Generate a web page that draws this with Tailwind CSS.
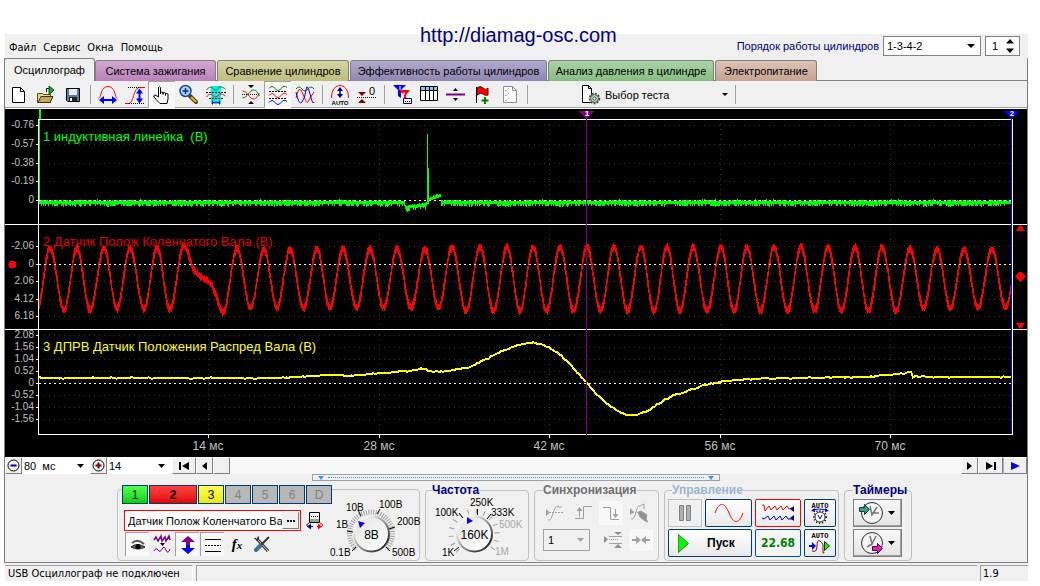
<!DOCTYPE html>
<html lang="ru">
<head>
  <meta charset="UTF-8" />
  <meta name="viewport" content="width=device-width, initial-scale=1.0" />
  <title>Осциллограф</title>
  <script src="https://cdn.jsdelivr.net/npm/@tailwindcss/browser@4"></script>
</head>
<body class="bg-white pt-[34px] font-['Liberation_Sans',Arial,sans-serif] text-[11px] leading-[14px] text-black">

  <div class="relative mr-3 ml-1">

    <a href="http://diamag-osc.com" class="absolute -top-[11px] left-[416px] text-[20px] leading-6 text-[#000080]">http://diamag-osc.com</a>

    <!-- Menu -->
    <header class="ml-px flex h-6 items-center justify-between bg-[#f0f0f0] pr-2">
      <nav class="flex gap-[7px] pt-[3px] pl-1 font-['DejaVu_Sans_Condensed','DejaVu_Sans',sans-serif] text-[11px]">
        <button>Файл</button>
        <button>Сервис</button>
        <button>Окна</button>
        <button>Помощь</button>
      </nav>
      <div class="flex items-center">
        <label for="order" class="mr-1 text-[#000080]">Порядок работы цилиндров</label>
        <div class="relative mr-1">
          <select id="order" class="block h-5 w-[98px] appearance-none border border-[#828282] bg-white pl-[3px]">
            <option>1-3-4-2</option>
          </select>
          <svg class="pointer-events-none absolute top-2 right-1.5" width="8" height="4" viewBox="0 0 8 4"><path d="M0 0h8L4 4z" /></svg>
        </div>
        <div class="relative">
          <input type="text" value="1" aria-label="Цилиндр" class="block h-5 w-[35px] border border-[#828282] bg-white pl-1.5" />
          <svg class="absolute top-[3px] right-1.5" width="8" height="14" viewBox="0 0 8 14"><path d="M0 4.500h8L4 0zM0 9.500h8L4 14z" /></svg>
        </div>
      </div>
    </header>

    <main class="border-x border-[#808080] bg-[#f0f0f0]">

      <!-- Tabs -->
      <div class="relative z-10 -mb-px -ml-px flex h-[23px] items-end">
        <button class="h-[23px] w-[91px] rounded-t-[3px] border border-b-0 border-[#808080] bg-[#f0f0f0]">Осциллограф</button>
        <button class="mr-px h-[21px] w-[121px] rounded-t-[3px] border border-b-0 border-[#808080] bg-linear-to-b from-[#d3a8d1] to-[#b982b8]">Система зажигания</button>
        <button class="mr-px h-[21px] w-[132px] rounded-t-[3px] border border-b-0 border-[#808080] bg-linear-to-b from-[#d5d5a4] to-[#bdbd7c]">Сравнение цилиндров</button>
        <button class="mr-px h-[21px] w-[197px] rounded-t-[3px] border border-b-0 border-[#808080] bg-linear-to-b from-[#b1aacd] to-[#8f86b1]">Эффективность работы цилиндров</button>
        <button class="mr-px h-[21px] w-[166px] rounded-t-[3px] border border-b-0 border-[#808080] bg-linear-to-b from-[#aad3a6] to-[#85bd80]">Анализ давления в цилиндре</button>
        <button class="h-[21px] w-[102px] rounded-t-[3px] border border-b-0 border-[#808080] bg-linear-to-b from-[#dcc3b5] to-[#c5a492]">Электропитание</button>
      </div>

      <!-- Toolbar -->
      <div class="flex h-[29px] items-stretch border-t border-b border-[#808080] border-b-white shadow-[inset_0_-1px_0_#a0a0a0]">
        <button aria-label="Новый" class="grid w-[27px] place-items-center"><svg width="22" height="22" viewBox="0 0 22 22" fill="none"><path d="M4.500 3.500h8l4 4v11h-12zM12.500 3.500v4h4" stroke="#000" fill="#fff" /></svg></button>
        <button aria-label="Открыть" class="grid w-[27px] place-items-center"><svg width="22" height="22" viewBox="0 0 22 22"><path d="M2.500 18.500v-9h5l1 1h7v8z" fill="#e8d48a" stroke="#5c4a10" /><path d="M3 18.500l3-6h12l-3 6z" fill="#c9a84c" stroke="#3c3008" /><path d="M14 2l5 4-5 5z" fill="#00b020" stroke="#005c10" /><path d="M11.500 8V4.500H14" fill="none" stroke="#000" /></svg></button>
        <button aria-label="Сохранить" class="grid w-[27px] place-items-center"><svg width="22" height="22" viewBox="0 0 22 22"><path d="M4.500 4.500h13v13h-12l-1-1z" fill="#5a78a8" stroke="#000" /><path d="M7 5h8v6H7z" fill="#e8eef8" /><path d="M7 13h8v4H7z" fill="#222" /><path d="M8 14h2v3H8z" fill="#fff" /></svg></button>
        <span class="my-1 mr-[3px] ml-1 w-px bg-[#a0a0a0]"></span>
        <button aria-label="Ширина" class="grid w-[27px] place-items-center"><svg width="22" height="22" viewBox="0 0 22 22" fill="none"><path d="M1.500 14.500c2-1 2-3 2.500-5C5 5 8 2.500 11 2.500S17 5 18 9.500c.5 2 .5 4 2.500 5" stroke="#f00" /><path d="M5 16h12" stroke="#00f" stroke-width="2" /><path d="M7 12v8l-5-4zM15 12v8l5-4z" fill="#00f" /></svg></button>
        <button aria-label="Высота" class="grid w-[27px] place-items-center"><svg width="22" height="22" viewBox="0 0 22 22" fill="none"><path d="M1 19.500h4c5-1 4-15 10-16h6" stroke="#f00" /><path d="M4 3.500h11M5 19.500h16" stroke="#000" stroke-dasharray="1 1" /><path d="M15.500 8v8" stroke="#00f" stroke-width="2" /><path d="M12 9.500h7l-3.500-5zM12 14.500h7l-3.500 5z" fill="#00f" /></svg></button>
        <button aria-label="Рука" class="grid w-[27px] place-items-center border-t border-l border-[#a0a0a0] bg-[#f8f8f8]"><svg width="22" height="22" viewBox="0 0 22 22"><path d="M7.500 13V3.500q1-1.500 2 0V10V8.500q1-1 2.500 0V10.500V9q1-1 2.500 0v2.500V10q1-1 2.500 0v5l-1 4.500h-7L5 15.500 2.500 12q1-2 3.500 0z" fill="#fff" stroke="#000" /></svg></button>
        <button aria-label="Лупа" class="grid w-[27px] place-items-center"><svg width="22" height="22" viewBox="0 0 22 22"><path d="M12 12l6 6" stroke="#4a3c10" stroke-width="4" stroke-linecap="round" /><path d="M13 13l5 5" stroke="#d8b030" stroke-width="2" /><circle cx="7.500" cy="7" r="5.500" fill="#a8d0f4" stroke="#204a80" stroke-width="1.500" /><path d="M4.500 7h6M7.500 4v6" stroke="#003090" stroke-width="1.500" /></svg></button>
        <button aria-label="Область" class="grid w-[27px] place-items-center"><svg width="22" height="22" viewBox="0 0 22 22" fill="none"><path d="M6 2h10v18H6z" fill="#00f0f0" /><path d="M1.500 6c3-4 5-3 7-1s4 1 5-1 4-1 7 1" stroke="#008000" /><path d="M1.500 13c3-4 5-3 7-1s4 1 5-1 4-1 7 1" stroke="#f00" /><path d="M1 8.500h20M4 14.500h15" stroke="#000" stroke-dasharray="2 1" /><path d="M7 18.500h8M7.500 16.500v4M14.500 16.500v4" stroke="#000080" /></svg></button>
        <span class="my-1 mr-[3px] ml-1 w-px bg-[#a0a0a0]"></span>
        <button aria-label="Совместить" class="grid w-[27px] place-items-center"><svg width="22" height="22" viewBox="0 0 22 22" fill="none"><path d="M2 10.500h18" stroke="#000" stroke-dasharray="1 1" /><path d="M2.500 7c5 0 7 8 11 8 3 0 4-3 6-6" stroke="#f00" /><path d="M2.500 14c5 0 7-8 11-8 3 0 4 3 6 6" stroke="#008000" /><path d="M8 1h6l-3 3zM8 20h6l-3-3z" fill="#000" /></svg></button>
        <button aria-label="Разделить" class="grid w-[27px] place-items-center border-t border-l border-[#a0a0a0] bg-[#f8f8f8]"><svg width="22" height="22" viewBox="0 0 22 22" fill="none"><path d="M2 4.500q3-4 6 0t6 0 6-1" stroke="#008000" /><path d="M2 11.500q3-4 6 0t6 0 6-1" stroke="#f00" /><path d="M2 18.500q3-4 6 0t6 0 6-1" stroke="#00f" /><path d="M2 7.500h18M2 14.500h18" stroke="#000" stroke-dasharray="2 1" /></svg></button>
        <button aria-label="Наложить" class="grid w-[27px] place-items-center"><svg width="22" height="22" viewBox="0 0 22 22" fill="none"><path d="M2 5q3-4 6 0t6 0 6 0" stroke="#008000" /><path d="M2 14Q5-1 9 10t5 8 6-10" stroke="#f00" /><path d="M2 8q3 14 6 10t4-12 4 4 4 8" stroke="#00f" /></svg></button>
        <span class="my-1 mr-[3px] ml-1 w-px bg-[#a0a0a0]"></span>
        <button aria-label="Авто" class="grid w-[27px] place-items-center"><svg width="22" height="22" viewBox="0 0 22 22" fill="none"><path d="M2.500 14C2.500 5 7 1.500 11 1.500S19.500 5 19.500 14" stroke="#f00" /><path d="M11 5v6" stroke="#000080" stroke-width="1.500" /><path d="M8 7h6l-3-4zM8 10h6l-3 4z" fill="#000080" /><text x="11" y="20.500" font-size="6" font-weight="bold" text-anchor="middle" fill="#000">AUTO</text></svg></button>
        <button aria-label="Ноль" class="grid w-[27px] place-items-center"><svg width="22" height="22" viewBox="0 0 22 22"><path d="M2 8h8l-4 4zM2 19h8l-4-4z" fill="#800000" /><path d="M1 13.500h19" stroke="#000" stroke-dasharray="1 1" /><text x="13" y="11" font-size="11">0</text></svg></button>
        <span class="my-1 mr-[3px] ml-1 w-px bg-[#a0a0a0]"></span>
        <button aria-label="Фильтр" class="grid w-[27px] place-items-center"><svg width="22" height="22" viewBox="0 0 22 22"><path d="M2 1h13L10 6v8l-3-2V6z" fill="#00f" /><path d="M8 6h11l-4 5v6l-2-2v-4z" fill="#f00" /><path d="M9 2v4M13 8v3" stroke="#fff" /><path d="M12.500 14.500h8v5h-8z" fill="#fff" stroke="#000080" /><path d="M14 17.500h5" stroke="#00f" stroke-dasharray="1 1" /></svg></button>
        <button aria-label="Таблица" class="grid w-[27px] place-items-center"><svg width="22" height="22" viewBox="0 0 22 22"><path d="M2.500 2.500h17v14h-17z" fill="#fff" stroke="#000" /><path d="M3 3h16v3H3z" fill="#a0c0e8" /><path d="M3 6.500h16M7.500 3v13M11.500 3v13M15.500 3v13" stroke="#000" /></svg></button>
        <button aria-label="Линия" class="grid w-[27px] place-items-center"><svg width="22" height="22" viewBox="0 0 22 22"><path d="M1 9.500h19v2H1z" fill="#800080" /><path d="M8 7h5l-2.500-3zM8 14h5l-2.500 3z" /></svg></button>
        <button aria-label="Флаг" class="grid w-[27px] place-items-center"><svg width="22" height="22" viewBox="0 0 22 22"><path d="M4.500 3v16" stroke="#000" /><path d="M5 4q3-3 6 0t5 0v7q-3 1-5-1t-6 1z" fill="#f00" stroke="#600" /><path d="M13 13v7M9.500 16.500h7" stroke="#008000" stroke-width="2" /></svg></button>
        <button aria-label="Отчёт" disabled class="grid w-[27px] place-items-center"><svg width="22" height="22" viewBox="0 0 22 22" fill="none" stroke="#909090"><path d="M4.500 2.500h9l4 4v12h-13zM13.500 2.500v4h4" fill="#fafafa" /><path d="M6 6l1 1 3-3M6 11l1 1 3-3M6 16l1 1 3-3" stroke-dasharray="1 1" /></svg></button>
        <span class="my-1 mr-[3px] ml-1 w-px bg-[#a0a0a0]"></span>
        <button class="ml-12 flex w-[152px] items-center">
          <svg class="mr-1" width="22" height="22" viewBox="0 0 22 22" fill="none"><path d="M3.500 1.500h6l3 3v14h-9zM9.500 1.500v3h3" fill="#fff" stroke="#000" /><circle cx="15.500" cy="14.500" r="4.500" fill="#b8ccb8" stroke="#405040" stroke-width="2.500" stroke-dasharray="1.800 1.200" /><circle cx="15.500" cy="14.500" r="4" fill="#b8ccb8" stroke="#506850" /><circle cx="15.500" cy="14.500" r="1.500" fill="#fff" stroke="#405040" /></svg>
          <span class="grow text-left">Выбор теста</span>
          <svg class="mr-[3px]" width="6" height="3" viewBox="0 0 6 3"><path d="M0 0h6L3 3z" /></svg>
        </button>
        <span class="my-1 ml-1 w-px bg-[#a0a0a0]"></span>
      </div>

      <!-- Oscillogram -->
      <div id="scope" class="relative h-[348px] bg-black text-[10px] leading-none text-[#c0c0c0]">
        <svg class="absolute inset-0 h-full w-full" viewBox="5 109 1022 348" preserveAspectRatio="none" fill="none" shape-rendering="crispEdges">
          <g id="grid" stroke="#3c3c00" stroke-dasharray="1 4"></g>
          <path d="M39.500 109v92" stroke="#0f0" />
          <path d="M39 109h2v10h-2z" fill="#0f0" />
          <path d="M38 119.500h975M5 224.500h1022M5 329.500h1022M38 434.500h975M38.500 119v316M1012.500 119v316" stroke="#fff" />
          <path d="M1011.500 118v316" stroke="#00f" />
          <g id="ticks" stroke="#fff"></g>
          <path id="trace1" stroke="#0f0" />
          <path id="trace2" stroke="#f00" />
          <path id="trace3" stroke="#ff0" stroke-width="2" />
          <path d="M39 200.500h972M39 264.500h972M39 383.500h972" stroke="#fff" stroke-dasharray="2 3" />
          <path d="M586.500 118v317" stroke="#800080" />
          <path d="M579 111h15l-7 8h-1z" fill="#800080" />
          <path d="M1004 111h15l-7 8h-1z" fill="#00f" />
          <path d="M1016 231h9l-4-6h-1zM1016 323h9l-4 6h-1zM1015 276.500l5.500-5 5 5-5 5z" fill="#f00" />
          <circle cx="12.500" cy="264.500" r="4" fill="#f00" />
        </svg>
        <div class="absolute top-5 left-[38px] text-[13px] leading-[15px] whitespace-pre text-[#0f0]">1 индуктивная линейка  (В)</div>
        <div class="absolute top-[125px] left-[38px] text-[13px] leading-[15px] text-[#e00000]">2 Датчик Полож Коленчатого Вала (В)</div>
        <div class="absolute top-[230px] left-[38px] text-[13px] leading-[15px] text-[#ff0]">3 ДПРВ Датчик Положения Распред Вала (В)</div>
      </div>

      <!-- Time scale and scrolling -->
      <div class="flex h-[17px] bg-[#f8f8f8]">
        <button aria-label="Уменьшить" class="w-[17px] border border-white border-r-[#808080] border-b-[#808080] bg-[#f0f0f0]"><svg width="15" height="15" viewBox="0 0 15 15"><circle cx="7.500" cy="7.500" r="5.500" fill="#f4f4f4" stroke="#000" /><path d="M4.500 7.500h6" stroke="#000080" stroke-width="2" /></svg></button>
        <div class="relative">
          <select aria-label="Развёртка" class="block h-[17px] w-[68px] appearance-none bg-white pl-0.5"><option>80 &nbsp;мс</option></select>
          <svg class="pointer-events-none absolute top-[7px] right-1.5" width="7" height="4" viewBox="0 0 7 4"><path d="M0 0h7L3.500 4z" /></svg>
        </div>
        <button aria-label="Увеличить" class="w-[17px] border border-white border-r-[#808080] border-b-[#808080] bg-[#f0f0f0]"><svg width="15" height="15" viewBox="0 0 15 15"><circle cx="7.500" cy="7.500" r="5.500" fill="#f4f4f4" stroke="#000" /><path d="M4.500 7.500h6M7.500 4.500v6" stroke="#800000" stroke-width="2" /></svg></button>
        <div class="relative">
          <select aria-label="Шаг" class="block h-[17px] w-[65px] appearance-none bg-white pl-0.5"><option>14</option></select>
          <svg class="pointer-events-none absolute top-[7px] right-[7px]" width="7" height="4" viewBox="0 0 7 4"><path d="M0 0h7L3.500 4z" /></svg>
        </div>
        <button aria-label="В начало" class="grid w-6 place-items-center border border-white border-r-[#808080] border-b-[#808080] bg-[#f0f0f0]"><svg width="12" height="8" viewBox="0 0 12 8"><path d="M1 0h2v8H1zM11 0v8L4 4z" /></svg></button>
        <button aria-label="Назад" class="grid w-[17px] place-items-center border border-white border-r-[#808080] border-b-[#808080] bg-[#f0f0f0]"><svg width="5" height="8" viewBox="0 0 5 8"><path d="M5 0v8L0 4z" /></svg></button>
        <span class="w-[17px] border border-white border-r-[#808080] border-b-[#808080] bg-[#f0f0f0]"></span>
        <span class="grow"></span>
        <button aria-label="Вперёд" class="grid w-[17px] place-items-center border border-white border-r-[#808080] border-b-[#808080] bg-[#f0f0f0]"><svg width="5" height="8" viewBox="0 0 5 8"><path d="M0 0v8l5-4z" /></svg></button>
        <button aria-label="В конец" class="grid w-[25px] place-items-center border border-white border-r-[#808080] border-b-[#808080] bg-[#f0f0f0]"><svg width="12" height="8" viewBox="0 0 12 8"><path d="M9 0h2v8H9zM1 0v8l7-4z" /></svg></button>
        <button aria-label="Воспроизвести" class="grid w-6 place-items-center border border-white border-r-[#808080] border-b-[#808080] border-l-[#99b4d1] bg-[#f0f0f0]"><svg width="9" height="8" viewBox="0 0 9 8"><path d="M0 0v8l9-4z" fill="#00f" /></svg></button>
      </div>

      <!-- Splitter -->
      <div class="mr-[307px] ml-[307px] flex h-[7px] items-center gap-1 border border-[#a0a0a0] px-[5px]">
        <svg width="6" height="4" viewBox="0 0 6 4"><path d="M0 0h6L3 4z" fill="#3399ff" /></svg>
        <span class="h-px grow border-t border-dotted border-[#3399ff]"></span>
        <svg width="6" height="4" viewBox="0 0 6 4"><path d="M0 0h6L3 4z" fill="#3399ff" /></svg>
      </div>

      <!-- Control panel -->
      <div class="flex h-[82px] gap-[5px] border-b border-[#808080] pt-[3px] pl-28">

        <!-- Channels -->
        <section class="mt-[5px] flex h-[72px] w-[303px] rounded border border-[#c0c0c0]">
          <div class="-mt-[5px] w-[214px] pl-1">
            <div class="flex h-[19px] gap-px bg-[#f0f0f0]">
              <button class="w-[26px] border border-[#003c74] bg-linear-to-b from-[#50ff50] to-[#00d000] text-[12px]">1</button>
              <button class="w-12 border border-[#003c74] bg-linear-to-b from-[#ff4040] to-[#e00000] text-[12px] font-bold">2</button>
              <button class="w-[26px] border border-[#003c74] bg-linear-to-b from-[#ffff50] to-[#e8e800] text-[12px]">3</button>
              <button class="w-[26px] border border-[#003c74] bg-[#b8b8b8] text-[12px] text-[#808080]">4</button>
              <button class="w-[26px] border border-[#003c74] bg-[#b8b8b8] text-[12px] text-[#808080]">5</button>
              <button class="w-[26px] border border-[#003c74] bg-[#b8b8b8] text-[12px] text-[#808080]">6</button>
              <button class="w-[26px] border border-[#003c74] bg-[#b8b8b8] text-[12px] text-[#808080]">D</button>
            </div>
            <div class="mt-1.5 flex items-center gap-1 pl-0.5">
              <div class="flex h-[21px] w-[177px] items-center border border-[#f00] bg-white pr-px">
                <input type="text" value="Датчик Полож Коленчатого Вала" aria-label="Имя канала" class="min-w-0 grow pl-[3px]" />
                <button aria-label="Выбрать" class="grid h-[17px] w-[17px] shrink-0 place-items-center border border-[#f0f0f0] border-r-[#808080] border-b-[#808080] bg-[#f0f0f0]"><svg width="8" height="2" viewBox="0 0 8 2"><path d="M0 0h2v2H0zM3 0h2v2H3zM6 0h2v2H6z" /></svg></button>
              </div>
              <button aria-label="Инверсия"><svg width="20" height="20" viewBox="0 0 20 20" fill="none"><path d="M4.500 1.500h10v10h-10z" fill="#fff" stroke="#000" /><path d="M5 8h9v3H5z" fill="#a0a0a0" /><path d="M6 5.500h8" stroke="#000" stroke-dasharray="1 1" /><path d="M6 10h2" stroke="#0f0" /><path d="M4 12q-4 2-1 3.500h5" stroke="#000080" /><path d="M6 12.500v6l-4-3z" fill="#000080" /><path d="M15 12q5 2 1 3.500h-4" stroke="#f00" /><path d="M13 12.500v6l4-3z" fill="#f00" /></svg></button>
            </div>
            <div class="mt-px flex h-6 gap-px pl-[3px]">
              <button aria-label="Видимость" class="grid w-6 place-items-center border-t border-l border-[#a0a0a0] bg-[#f8f8f8]"><svg width="16" height="12" viewBox="0 0 16 12"><path d="M2 4q6-5 12 1" fill="none" stroke="#555" stroke-width="2" /><path d="M1 8q6-5 14 0-7 4-14 0z" fill="#666" stroke="#222" /><circle cx="8" cy="7.500" r="2.500" fill="#000" /></svg></button>
              <button aria-label="Сглаживание" class="grid w-6 place-items-center"><svg width="20" height="20" viewBox="0 0 20 20" fill="none"><path d="M2 6l2-3 2 4 3-5 1 5 3-4 1 4 3-5 1 4" stroke="#800080" stroke-width="1.500" /><path d="M8 9h5l-2.500 3z" fill="#000" /><path d="M2 17q2-4 4-1t4-1 4 1 4-1" stroke="#800080" /></svg></button>
              <button aria-label="Сдвиг" class="grid w-6 place-items-center border-t border-l border-[#a0a0a0] bg-[#f8f8f8]"><svg width="20" height="20" viewBox="0 0 20 20"><path d="M3 7l7-6 7 6h-5v3H8V7z" fill="#800080" /><path d="M3 13l7 6 7-6h-5v-3H8v3z" fill="#00f" /></svg></button>
              <button aria-label="Уровни" class="grid w-6 place-items-center border-t border-l border-[#a0a0a0] bg-[#f8f8f8]"><svg width="18" height="18" viewBox="0 0 18 18" stroke="#000"><path d="M1 3.500h16M1 15.500h16" /><path d="M1 9.500h16" stroke-dasharray="2 1" /></svg></button>
              <button aria-label="Функция" class="w-6 font-['Liberation_Serif',serif] text-[15px] font-bold italic">f<span class="text-[11px]">x</span></button>
              <button aria-label="Настройка" class="grid w-6 place-items-center"><svg width="18" height="18" viewBox="0 0 18 18"><path d="M4 4l11 12" stroke="#333" stroke-width="3" /><path d="M4 4l11 12" stroke="#ddd" /><path d="M1.500 3l3 2 1-3.500" fill="none" stroke="#333" stroke-width="1.500" /><path d="M16 2L8 10" stroke="#333" stroke-width="2" /><path d="M7 11l-4 4" stroke="#3a6eb0" stroke-width="4" stroke-linecap="round" /></svg></button>
            </div>
          </div>
          <svg class="mt-[3px] shrink-0 overflow-visible" width="88" height="66" viewBox="331 493 88 66" font-size="10">
            <path d="M355 549A21.500 21.500 0 1 1 385 549" fill="none" stroke="#a0a0a0" stroke-width="5" stroke-dasharray="1 1.400" />
            <path d="M355 547l-4 4M352 532l-6-1M360 516l-3-6M376 514l3-5M388 529l6-2M385 547l4 4" stroke="#000" />
            <circle cx="370.500" cy="534" r="17.500" fill="url(#face)" stroke="url(#rim)" stroke-width="2" />
            <path d="M357 521l7 2-5 5z" fill="#00f" />
            <text x="370.500" y="539" font-size="12" text-anchor="middle">8В</text>
            <g>
              <text x="345" y="511">10В</text><text x="378" y="508">100В</text><text x="335" y="528">1В</text>
              <text x="396" y="525">200В</text><text x="329" y="556">0.1В</text><text x="391" y="556">500В</text>
            </g>
          </svg>
        </section>

        <!-- Frequency -->
        <fieldset class="h-[77px] w-[104px] rounded border border-[#c0c0c0]">
          <legend class="ml-1.5 text-[12px] leading-3 font-bold text-[#000080]">Частота</legend>
          <svg class="overflow-visible" width="101" height="62" viewBox="426 496 101 62" font-size="10">
            <defs>
              <linearGradient id="rim" x1="0" y1="0" x2="1" y2="1"><stop offset="0.200" stop-color="#f4f4f4" /><stop offset="1" stop-color="#000" /></linearGradient>
              <linearGradient id="face" x1="0" y1="0" x2="1" y2="1"><stop offset="0" stop-color="#e4e4e4" /><stop offset="1" stop-color="#fff" /></linearGradient>
            </defs>
            <path d="M458 551A23 23 0 1 1 490 551" fill="none" stroke="#a0a0a0" stroke-width="5" stroke-dasharray="1 7" />
            <path d="M459 547l-5 4M463 518l-4-5M477.500 515v-6M487 519l4-5" stroke="#000" />
            <circle cx="474.500" cy="534" r="17.500" fill="url(#face)" stroke="url(#rim)" stroke-width="2" />
            <path d="M467 517l6 4-6 3z" fill="#00f" />
            <text x="474.500" y="539" font-size="12" text-anchor="middle">160K</text>
            <text x="435" y="516">100K</text><text x="470" y="506">250K</text><text x="491" y="516">333K</text>
            <text x="499" y="528" fill="#a8a8a8">500K</text><text x="442" y="556">1K</text><text x="495" y="555" fill="#a8a8a8">1M</text>
          </svg>
        </fieldset>

        <!-- Sync -->
        <fieldset class="h-[77px] w-[125px] rounded border border-[#c0c0c0] pl-2">
          <legend class="text-[12px] leading-3 font-bold text-[#707070]">Синхронизация</legend>
          <div class="mt-[5px] flex gap-1">
            <button aria-label="По уровню" disabled class="grid h-6 w-6 place-items-center"><svg width="20" height="20" viewBox="0 0 20 20" fill="none" stroke="#a0a0a0"><path d="M3 17c5 2 5-15 10-14 2 0 0 4 4 0" /><path d="M4 9.500h15" stroke-dasharray="2 1" /><path d="M1 6v7l4-3.500z" fill="#a0a0a0" stroke="none" /></svg></button>
            <button aria-label="По фронту" disabled class="grid h-6 w-6 place-items-center"><svg width="20" height="20" viewBox="0 0 20 20" fill="none" stroke="#a0a0a0"><path d="M2 15.500h8.500v-12H19M6.500 14V6" /><path d="M3.500 8h6l-3-4z" fill="#a0a0a0" stroke="none" /></svg></button>
            <button aria-label="По спаду" disabled class="grid h-6 w-6 place-items-center bg-[#f8f8f8]"><svg width="20" height="20" viewBox="0 0 20 20" fill="none" stroke="#a0a0a0"><path d="M2 4.500h7.500v12H18M14.500 6v7" /><path d="M11.500 11h6l-3 4z" fill="#a0a0a0" stroke="none" /></svg></button>
            <button aria-label="Вручную" disabled class="grid h-6 w-6 place-items-center"><svg width="20" height="20" viewBox="0 0 20 20" fill="none" stroke="#a0a0a0"><path d="M2 16c5 2 5-15 9-13l4-2v5" /><path d="M4 9.500h8" stroke-dasharray="1 1" /><path d="M1 5v7l4-3z" fill="#a0a0a0" stroke="none" /><path d="M9 9l3-1 6 4-1 4 2 3-3-1-5-4z" fill="#909090" /></svg></button>
          </div>
          <div class="mt-1 flex items-center">
            <div class="relative">
              <select aria-label="Канал синхронизации" class="block h-[22px] w-[47px] appearance-none border border-[#a0a0a0] bg-[#f0f0f0] pl-1"><option>1</option></select>
              <svg class="pointer-events-none absolute top-[9px] right-1.5" width="7" height="4" viewBox="0 0 7 4"><path d="M0 0h7L3.500 4z" fill="#a0a0a0" /></svg>
            </div>
            <button aria-label="Окно" disabled class="ml-[11px] grid h-[22px] w-6 place-items-center"><svg width="20" height="20" viewBox="0 0 20 20"><path d="M1 6v7l4-3.500zM11 2h8l-4 3zM11 18h8l-4-4z" fill="#909090" /><path d="M6 6.500h13M6 13.500h13" stroke="#a0a0a0" /><path d="M6 9.500h10" stroke="#a0a0a0" stroke-dasharray="1 1" /></svg></button>
            <button aria-label="Сжать" disabled class="ml-1 grid h-[22px] w-6 place-items-center bg-[#f8f8f8]"><svg width="18" height="10" viewBox="0 0 18 10"><path d="M0 4h4V1l5 4-5 4V6H0zM18 4h-4V1L9 5l5 4V6h4z" fill="#a0a0a0" /></svg></button>
          </div>
        </fieldset>

        <!-- Controls -->
        <fieldset class="h-[77px] w-[175px] rounded border border-[#c0c0c0] pl-[3px]">
          <legend class="ml-1 text-[12px] leading-3 font-bold text-[#99b4d1]">Управление</legend>
          <div class="mt-[3px] flex gap-[3px]">
            <button aria-label="Пауза" disabled class="grid h-7 w-[34px] place-items-center border border-[#c0c0c0]"><svg width="12" height="16" viewBox="0 0 12 16"><path d="M.5.500h4v15h-4zM7.500.500h4v15h-4z" fill="#b0b0b0" stroke="#808080" /></svg></button>
            <button aria-label="Синус" class="grid h-7 w-[47px] place-items-center rounded-xs border border-[#003c74] bg-linear-to-b from-white to-[#e8e8e8]"><svg width="30" height="20" viewBox="0 0 30 20"><path d="M1 10C5-1 10-2 15 10s10 11 14 0" fill="none" stroke="#f00" /></svg></button>
            <button aria-label="Сравнение сигналов" class="grid h-7 w-[46px] place-items-center rounded-xs border border-[#f00] bg-linear-to-b from-white to-[#e8e8e8]"><svg width="34" height="20" viewBox="0 0 34 20" fill="none"><path d="M1 2h2l1 6 4-5 2 4 4-4 2 4 4-4 2 4 4-4 2 3 3-1" stroke="#f00" /><path d="M1 15l2 1 4-3 2 4 4-4 2 4 4-4 2 4 4-4 2 3h4" stroke="#00f" /><path d="M33 3v6l-4-3zM33 12v6l-4-3z" fill="#000080" /></svg></button>
            <button aria-label="Авто напряжение" class="grid h-7 w-8 place-items-center rounded-xs border border-[#003c74] bg-linear-to-b from-white to-[#e8e8e8]"><svg width="24" height="24" viewBox="0 0 24 24" fill="none"><text x="12" y="7" font-family="Liberation Mono" font-size="7" font-weight="bold" text-anchor="middle" fill="#000">AUTO</text><path d="M4 9q7-2 15 0" stroke="#00f" /><path d="M3 10l4-3v4zM21 10l-4-3v4z" fill="#00f" /><circle cx="12" cy="16" r="6" stroke="#000" stroke-dasharray="1 2" stroke-width="2" /><circle cx="12" cy="16" r="5" fill="#fff" stroke="#333" /><path d="M10 14l2 4 2-4" stroke="#00f" /></svg></button>
          </div>
          <div class="mt-0.5 flex gap-[3px]">
            <button class="flex h-7 w-[84px] items-center rounded-xs border border-[#003c74] bg-linear-to-b from-white to-[#e8e8e8] pl-[9px] text-[12px] font-bold"><svg class="mr-[18px]" width="11" height="19" viewBox="0 0 11 19"><path d="M.5.500v18l10-9z" fill="#0f0" stroke="#408040" /></svg>Пуск</button>
            <output class="grid h-7 w-[46px] place-items-center rounded-xs border border-[#0050a0] bg-[#f4f4f4] font-['DejaVu_Sans_Condensed','DejaVu_Sans',sans-serif] text-[12px] font-bold text-[#008000]">22.68</output>
            <button aria-label="Авто пуск" class="grid h-7 w-8 place-items-center rounded-xs border border-[#003c74] bg-linear-to-b from-white to-[#e8e8e8]"><svg width="24" height="24" viewBox="0 0 24 24" fill="none"><text x="12" y="7" font-family="Liberation Mono" font-size="7" font-weight="bold" text-anchor="middle" fill="#000">AUTO</text><path d="M4 20q5 2 5-5t3-5 3 4 0 6 1 1" stroke="#a00000" /><path d="M1 14h3v-3l4 4-4 4v-3H1z" fill="#00f" /><path d="M16.500 10.500v9l5-4.500z" fill="#0f0" stroke="#004000" /></svg></button>
          </div>
        </fieldset>

        <!-- Timers -->
        <fieldset class="h-[77px] w-[68px] rounded border border-[#c0c0c0] pl-2">
          <legend class="text-[12px] leading-3 font-bold text-[#000080]">Таймеры</legend>
          <button aria-label="Таймер пуска" class="mt-[3px] flex h-7 w-[49px] items-center gap-1 border border-[#808080] bg-linear-to-b from-[#f8f8f8] to-[#e4e4e4] pl-1 shadow-[inset_-1px_-1px_0_#a0a0a0]">
            <svg width="26" height="24" viewBox="0 0 26 24"><circle cx="14" cy="12" r="10.500" fill="#f4f4f4" stroke="#333" /><path d="M14 12h7M12 5l2 9 5-8" fill="none" stroke="#777" stroke-width="1.500" /><path d="M1.500 6.500h5v-3l5 5-5 5v-3h-5z" fill="#30a090" stroke="#103c38" /></svg>
            <svg width="7" height="4" viewBox="0 0 7 4"><path d="M0 0h7L3.500 4z" /></svg>
          </button>
          <button aria-label="Таймер остановки" class="mt-0.5 flex h-7 w-[49px] items-center gap-1 border border-[#808080] bg-linear-to-b from-[#f8f8f8] to-[#e4e4e4] pl-1 shadow-[inset_-1px_-1px_0_#a0a0a0]">
            <svg width="26" height="24" viewBox="0 0 26 24"><circle cx="14" cy="12" r="10.500" fill="#f4f4f4" stroke="#333" /><path d="M12 5l2 8 4-8M14 13l-5 3" fill="none" stroke="#777" stroke-width="1.500" /><path d="M14.500 15.500h5v-3l5 5-5 5v-3h-5z" fill="#e020c0" stroke="#500040" /></svg>
            <svg width="7" height="4" viewBox="0 0 7 4"><path d="M0 0h7L3.500 4z" /></svg>
          </button>
        </fieldset>
      </div>
    </main>

    <!-- Status bar -->
    <footer class="ml-px flex h-[18px] gap-[3px] bg-[#f0f0f0] pt-0.5 font-['DejaVu_Sans_Condensed','DejaVu_Sans',sans-serif] text-[11px] leading-4">
      <div class="w-[188px] border-t border-r border-[#a0a0a0] border-r-white pl-[3px] whitespace-nowrap">USB Осциллограф не подключен</div>
      <div class="grow border-t border-l border-[#a0a0a0]"></div>
      <div class="w-12 border-t border-l border-[#a0a0a0] pl-0.5">1.9</div>
    </footer>
  </div>

  <script>
    const channels = [
      { zero: 200, marks: [[125, "-0.76"], [144, "-0.57"], [163, "-0.38"], [181, "-0.19"], [200, "0"]] },
      { zero: 264, marks: [[246, "-2.06"], [264, "0"], [281, "2.06"], [299, "4.12"], [316, "6.18"]] },
      { zero: 383, marks: [[335, "2.08"], [347, "1.56"], [359, "1.04"], [371, "0.52"], [383, "0"], [395, "-0.52"], [407, "-1.04"], [419, "-1.56"]] },
    ];
    const times = [[208, "14 мс"], [379, "28 мс"], [549, "42 мс"], [720, "56 мс"], [890, "70 мс"]];
    const markers = [[586, "1"], [1011, "2"]];

    const scope = document.getElementById("scope");
    let grid = "";
    let ticks = "";

    function addLabel(text, className, left, top) {
      const label = document.createElement("span");
      label.className = className;
      label.textContent = text;
      if (left) label.style.left = left;
      label.style.top = top;
      scope.appendChild(label);
    }

    channels.forEach(channel => {
      channel.marks.forEach(([y, text]) => {
        if (y !== channel.zero) grid += `<path d="M44 ${y + 0.5}H1011" />`;
        ticks += `<path d="M36 ${y + 0.5}h3" />`;
        addLabel(text, "absolute left-0 w-[29px] -translate-y-1/2 text-right", null, (y - 109) + "px");
      });
    });
    times.forEach(([x, text]) => {
      grid += `<path d="M${x + 0.5} 124V434" />`;
      ticks += `<path d="M${x + 0.5} 434v4" />`;
      addLabel(text, "absolute -translate-x-1/2 text-[12px] leading-[14px]", ((x - 5) / 1022 * 100) + "%", "330px");
    });
    markers.forEach(([x, text]) => {
      addLabel(text, "absolute -translate-x-1/2 text-[8px] leading-[8px] font-bold text-white", ((x - 4) / 1022 * 100) + "%", "1px");
    });
    document.getElementById("grid").innerHTML = grid;
    document.getElementById("ticks").innerHTML = ticks;

    // repeatable noise
    let seed = 7;
    function noise() {
      seed = (seed * 16807) % 2147483647;
      return seed / 2147483647 * 2 - 1;
    }

    // smooth interpolation between extremes
    function curve(points, x, smooth) {
      let i = 1;
      while (i < points.length - 1 && points[i][0] < x) i++;
      const [x0, y0] = points[i - 1];
      const [x1, y1] = points[i];
      let t = (x - x0) / (x1 - x0);
      if (smooth) t = (1 - Math.cos(Math.PI * t)) / 2;
      return y0 + (y1 - y0) * t;
    }

    // channel 1
    let d = "";
    for (let x = 39; x < 1011; x++) {
      let top = 201 - (noise() > 0.2 ? 1 : 0) - (noise() > 0.9 ? 1 : 0);
      let bottom = 204 + (noise() > 0 ? 2 : 0) + (noise() > 0.8 ? 1 : 0);
      let shift = 0;
      if (x >= 405 && x < 427) shift = 5 - (x - 405) / 8;
      if (x > 428 && x <= 440) {
        shift = -3 - (x - 428) / 3;
        bottom = 204;
      }
      if (x === 427) top = 134;
      if (x === 428) top = 168;
      d += `M${x + 0.5} ${Math.round(top + shift)}V${Math.round(bottom + shift)}`;
    }
    document.getElementById("trace1").setAttribute("d", d);

    // channel 2
    const peaks = [237, 264, 290, 317, 343, 370, 397, 425, 452, 480, 507, 533, 560, 587, 614, 641, 667, 693, 721, 747, 774, 801, 828, 855, 882, 910, 937, 964, 992, 1019];
    const wave = [[37, 310], [50, 248], [64, 310], [77, 248], [90, 310], [104, 248], [117, 309], [130, 248], [144, 309], [157, 248], [170, 309], [184, 245]];
    const tail = [[184, 245], [188, 253], [192, 266], [196, 273], [202, 278], [207, 280], [212, 285], [217, 298], [220, 308], [223, 313]];
    const rest = [[223, 313]];
    peaks.forEach((x, i) => {
      const strong = x > 430 && x < 900;
      rest.push([x, strong ? 247 : 249]);
      if (i < peaks.length - 1) rest.push([(x + peaks[i + 1]) / 2, strong ? 311 : 308]);
    });
    function crank(x) {
      if (x < 184) return curve(wave, x, true);
      if (x < 223) return curve(tail, x, false);
      return curve(rest, x, true);
    }
    d = "";
    for (let x = 39; x < 1011; x++) {
      const a = crank(x);
      const b = crank(x + 1);
      const top = Math.round(Math.min(a, b) - 1.5 - Math.abs(noise()) * 2.5);
      const bottom = Math.round(Math.max(a, b) + 1.5 + Math.abs(noise()) * 2.5);
      d += `M${x + 0.5} ${top}V${bottom}`;
    }
    document.getElementById("trace2").setAttribute("d", d);

    // channel 3
    const cam = [[39, 377], [46, 378], [280, 378], [310, 376], [333, 375], [350, 376], [380, 373], [410, 371], [426, 368], [429, 372], [450, 371], [470, 367], [485, 360], [500, 352], [515, 346], [528, 343], [536, 343], [548, 347], [558, 353], [568, 362], [577, 372], [587, 383], [597, 395], [609, 405], [618, 411], [628, 415], [636, 415], [646, 412], [658, 404], [672, 396], [690, 390], [705, 385], [725, 381], [750, 379], [800, 378], [870, 377], [905, 373], [911, 371], [913, 377], [1011, 377]];
    d = "";
    for (let x = 39; x <= 1011; x += 2) {
      d += `${d ? "L" : "M"}${x} ${(curve(cam, x, false) + noise() * 0.7).toFixed(1)}`;
    }
    document.getElementById("trace3").setAttribute("d", d);
  </script>
</body>
</html>
